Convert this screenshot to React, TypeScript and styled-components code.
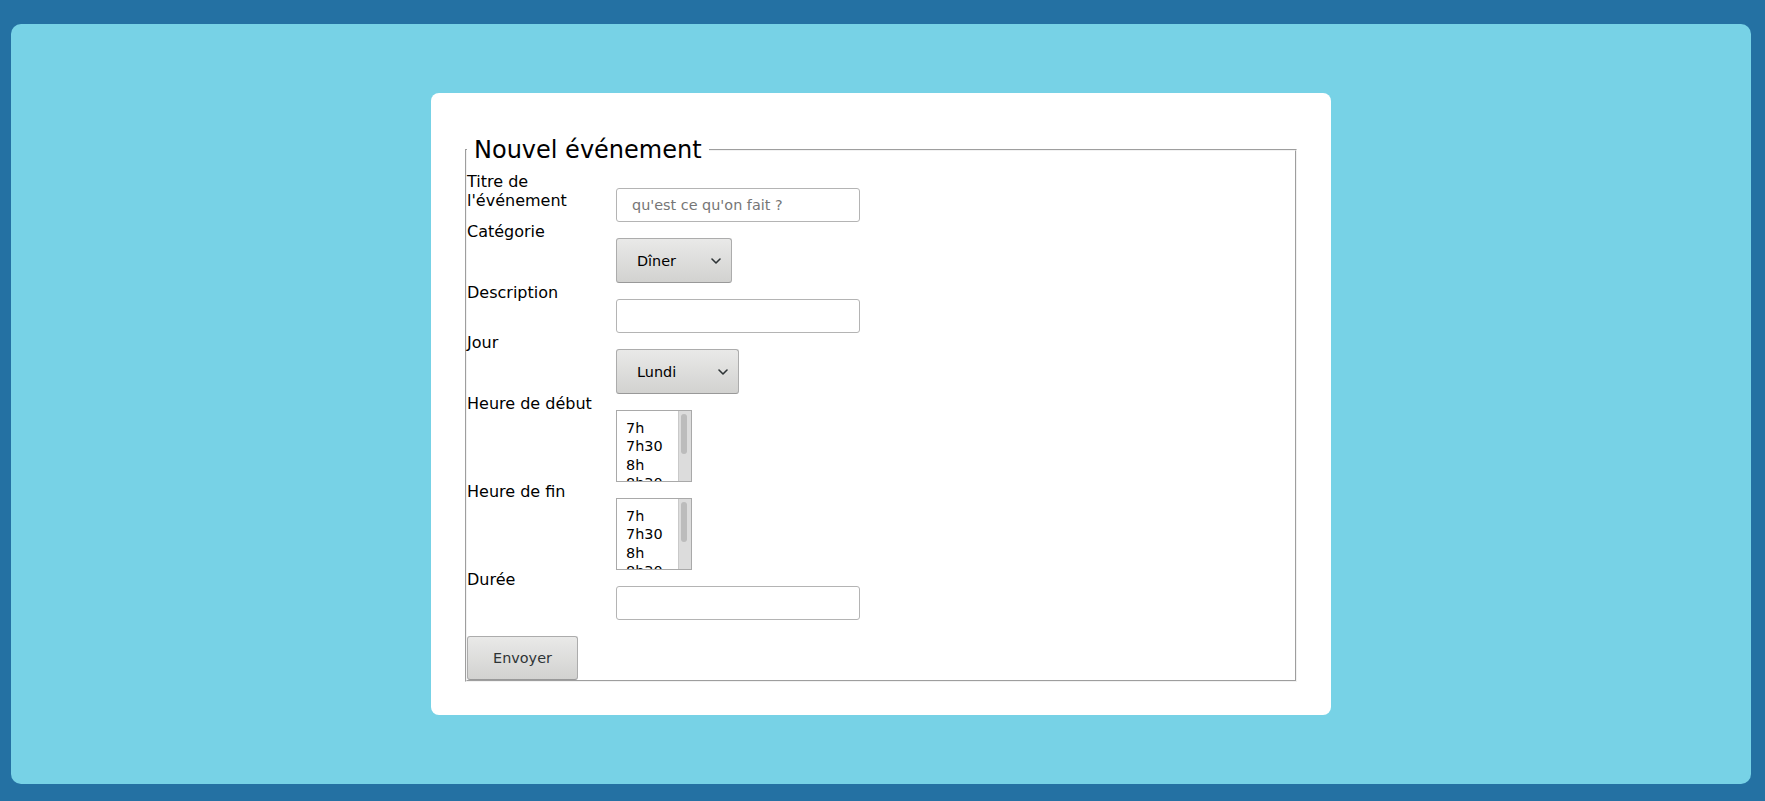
import React from "react";
import styled, { createGlobalStyle } from "styled-components";

const GlobalStyle = createGlobalStyle`
  html, body {
    margin: 0;
    padding: 0;
    height: 100%;
    background: #2471a3;
  }
  body {
    font-family: "DejaVu Sans", "Noto Sans", sans-serif;
  }
  #root {
    height: 100%;
  }
`;

const Page = styled.div`
  box-sizing: border-box;
  height: 100vh;
  padding: 24px 14px 17px 11px;
`;

const Stage = styled.main`
  height: 100%;
  background: #77d2e6;
  border-radius: 10px;
  display: flex;
  align-items: center;
  justify-content: center;
`;

const Card = styled.section`
  box-sizing: border-box;
  width: 900px;
  background: #ffffff;
  border-radius: 8px;
  padding: 43px 32px 33px;
`;

const Fieldset = styled.fieldset`
  margin: 0 2px;
  padding: 8px 0 0;
  border: 2px groove #f2f2f2;
  min-width: 0;
`;

const Legend = styled.legend`
  padding: 0 7px;
  font-size: 24px;
  line-height: 28px;
  color: #000000;
`;

const FormGrid = styled.div`
  display: grid;
  grid-template-columns: 149px 1fr;
  align-items: start;
`;

const Label = styled.label`
  font-size: 16px;
  color: #000000;
`;

const Control = styled.div`
  margin-top: 16px;
  justify-self: start;
  display: flex;
`;

const TextInput = styled.input`
  box-sizing: border-box;
  width: 244px;
  height: 34px;
  margin: 0;
  padding: 0 15px;
  border: 1px solid #b4b4b4;
  border-radius: 3px;
  background: #ffffff;
  color: #000000;
  font: 14.4px "DejaVu Sans", sans-serif;
  outline: none;

  &::placeholder {
    color: #767676;
  }
`;

const SelectWrap = styled.div`
  position: relative;
  display: inline-block;
`;

const Select = styled.select<{ $w: number }>`
  appearance: none;
  -webkit-appearance: none;
  box-sizing: border-box;
  width: ${(p) => p.$w}px;
  height: 45px;
  margin: 0;
  padding: 0 0 0 20px;
  border: 1px solid #acacac;
  border-bottom-color: #999999;
  border-radius: 3px;
  background: linear-gradient(#e9e9e8, #d2d2d0);
  color: #000000;
  font: 14.4px "DejaVu Sans", sans-serif;
  outline: none;
`;

const Chevron = styled.svg`
  position: absolute;
  right: 11px;
  top: 50%;
  width: 10px;
  height: 6px;
  margin-top: -3px;
  pointer-events: none;
`;

const ListBox = styled.div`
  box-sizing: border-box;
  width: 76px;
  height: 72px;
  border: 1px solid #a9a9a9;
  background: #ffffff;
  display: flex;
  overflow: hidden;
`;

const Options = styled.ul`
  flex: 1;
  margin: 0;
  padding: 8px 0 0 9px;
  list-style: none;
  font: 14.4px/18.3px "DejaVu Sans", sans-serif;
  color: #000000;
`;

const Track = styled.div`
  width: 10px;
  padding: 3px 0 0 2px;
  background: #dcdcdc;
  border-left: 1px solid #c9c9c9;
`;

const Thumb = styled.div`
  width: 6px;
  height: 40px;
  border-radius: 3px;
  background: #bcbcbc;
`;

const SubmitButton = styled.button`
  grid-column: 1 / -1;
  justify-self: start;
  box-sizing: border-box;
  width: 111px;
  height: 44px;
  margin: 16px 0 0;
  padding: 0;
  border: 1px solid #acacac;
  border-bottom-color: #999999;
  border-radius: 3px;
  background: linear-gradient(#e9e9e8, #d2d2d0);
  color: #2e3436;
  font: 14.4px "DejaVu Sans", sans-serif;
`;

const hours = ["7h", "7h30", "8h", "8h30", "9h", "9h30", "10h"];

function Dropdown({ width, options }: { width: number; options: string[] }) {
  return (
    <SelectWrap>
      <Select $w={width} defaultValue={options[0]}>
        {options.map((o) => (
          <option key={o}>{o}</option>
        ))}
      </Select>
      <Chevron viewBox="0 0 10 6">
        <polyline points="1,1 5,5 9,1" fill="none" stroke="#2e3436" strokeWidth="1.6" strokeLinecap="round" strokeLinejoin="round" />
      </Chevron>
    </SelectWrap>
  );
}

function HourList() {
  return (
    <ListBox>
      <Options>
        {hours.map((h) => (
          <li key={h}>{h}</li>
        ))}
      </Options>
      <Track>
        <Thumb />
      </Track>
    </ListBox>
  );
}

export default function App() {
  return (
    <>
      <GlobalStyle />
      <Page>
        <Stage>
          <Card>
            <Fieldset>
              <Legend>Nouvel événement</Legend>
              <FormGrid>
                <Label>Titre de l'événement</Label>
                <Control>
                  <TextInput placeholder="qu'est ce qu'on fait ?" />
                </Control>

                <Label>Catégorie</Label>
                <Control>
                  <Dropdown width={116} options={["Dîner", "Sport", "Travail"]} />
                </Control>

                <Label>Description</Label>
                <Control>
                  <TextInput />
                </Control>

                <Label>Jour</Label>
                <Control>
                  <Dropdown width={123} options={["Lundi", "Mardi", "Mercredi", "Jeudi", "Vendredi"]} />
                </Control>

                <Label>Heure de début</Label>
                <Control>
                  <HourList />
                </Control>

                <Label>Heure de fin</Label>
                <Control>
                  <HourList />
                </Control>

                <Label>Durée</Label>
                <Control>
                  <TextInput />
                </Control>

                <SubmitButton type="button">Envoyer</SubmitButton>
              </FormGrid>
            </Fieldset>
          </Card>
        </Stage>
      </Page>
    </>
  );
}
